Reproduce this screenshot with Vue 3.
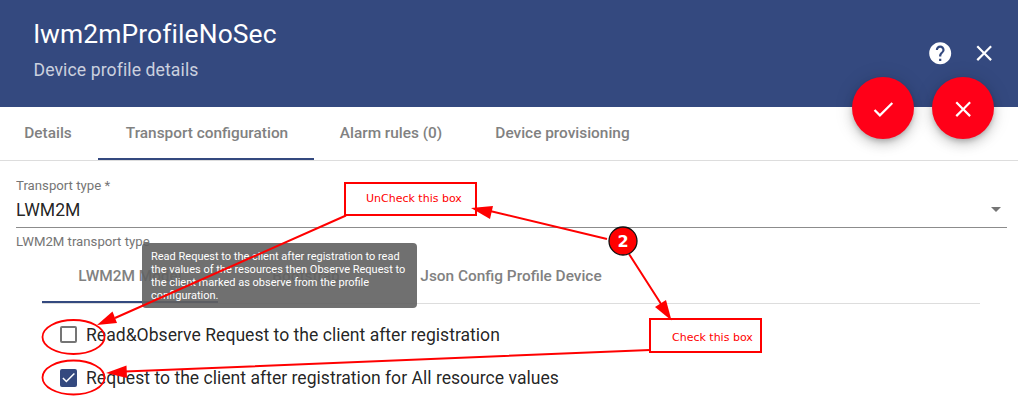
<script setup>
const mainTabs = [
  { label: 'Details', cls: 'details' },
  { label: 'Transport configuration', cls: 'transport', active: true },
  { label: 'Alarm rules (0)', cls: 'alarm' },
  { label: 'Device provisioning', cls: 'provisioning' },
]
const profileTabs = [
  { label: 'LWM2M Model', active: true },
  { label: 'Bootstrap' },
  { label: 'Json Config Profile Device', wide: true },
]
const options = [
  { label: 'Read&Observe Request to the client after registration', checked: false },
  { label: 'Request to the client after registration for All resource values', checked: true },
]
</script>

<template>
  <div class="page">
    <header class="header">
      <div class="titles">
        <h1>lwm2mProfileNoSec</h1>
        <p>Device profile details</p>
      </div>
      <div class="tools">
        <svg class="icon" viewBox="0 0 24 24"><path d="M12 2C6.48 2 2 6.48 2 12s4.48 10 10 10 10-4.480 10-10S17.52 2 12 2zm1 17h-2v-2h2v2zm2.070-7.750l-.9.920C13.450 12.900 13 13.500 13 15h-2v-.5c0-1.100.45-2.100 1.170-2.830l1.240-1.260c.37-.36.59-.86.59-1.410 0-1.100-.9-2-2-2s-2 .9-2 2H8c0-2.210 1.790-4 4-4s4 1.790 4 4c0 .88-.36 1.680-.93 2.250z" /></svg>
        <svg class="icon" viewBox="0 0 24 24"><path d="M19 6.410L17.590 5 12 10.590 6.410 5 5 6.410 10.590 12 5 17.590 6.410 19 12 13.410 17.590 19 19 17.590 13.410 12z" /></svg>
      </div>
      <div class="fabs">
        <button class="fab"><svg class="icon" viewBox="0 0 24 24"><path d="M9 16.170L4.830 12l-1.420 1.410L9 19 21 7l-1.410-1.410z" /></svg></button>
        <button class="fab"><svg class="icon" viewBox="0 0 24 24"><path d="M19 6.410L17.590 5 12 10.590 6.410 5 5 6.410 10.590 12 5 17.590 6.410 19 12 13.410 17.590 19 19 17.590 13.410 12z" /></svg></button>
      </div>
    </header>

    <nav class="tabs">
      <div v-for="t in mainTabs" :key="t.label" class="tab" :class="[t.cls, { active: t.active }]">{{ t.label }}</div>
    </nav>

    <main class="content">
      <div class="field">
        <label>Transport type *</label>
        <div class="select"><span>LWM2M</span><i class="caret"></i></div>
        <div class="hint">LWM2M transport type</div>
      </div>
      <nav class="subtabs">
        <div v-for="t in profileTabs" :key="t.label" class="subtab" :class="{ active: t.active, wide: t.wide }">{{ t.label }}</div>
      </nav>
      <div class="options">
        <div v-for="o in options" :key="o.label" class="option">
          <span class="box" :class="{ checked: o.checked }">
            <svg v-if="o.checked" viewBox="0 0 24 24"><path d="M4.100 12.700L9 17.600 20.300 6.300" fill="none" stroke="#fff" stroke-width="2.130" /></svg>
          </span>
          <span>{{ o.label }}</span>
        </div>
      </div>
    </main>

    <div class="tooltip">Read Request to the client after registration to read<br />the values of the resources then Observe Request to<br />the client marked as observe from the profile<br />configuration.</div>

    <svg class="notes" viewBox="0 0 1018 420" width="1018" height="420">
      <g fill="none" stroke="#f00" stroke-width="2">
        <path d="M346 215.500L115 318M607 239L490 211M629 254L663 307M650 350L125 371.500" />
        <rect x="345" y="183" width="131" height="32" />
        <rect x="650" y="319" width="111" height="33" />
      </g>
      <g fill="none" stroke="#f00" stroke-width="1.800">
        <ellipse cx="73.500" cy="337" rx="31" ry="17" />
        <ellipse cx="73.500" cy="377.500" rx="31" ry="17" />
      </g>
      <g fill="#f00">
        <path d="M97 325L112.500 311.500 117 323z" />
        <path d="M471 208L493 206 490 219z" />
        <path d="M671.500 320.500L655 307 666 300z" />
        <path d="M106 373L126.500 365.500 127 378z" />
      </g>
      <circle cx="623" cy="241" r="14" fill="#f00" stroke="#111" stroke-width="1.300" />
      <text class="number" x="623" y="246.500" text-anchor="middle">2</text>
      <text class="note" x="366" y="202">UnCheck this box</text>
      <text class="note" x="672" y="341">Check this box</text>
    </svg>
  </div>
</template>

<style>
body { margin: 0; background: #fff; }
</style>

<style scoped>
.page {
  position: relative;
  width: 1018px;
  height: 420px;
  overflow: hidden;
  background: #fff;
  font-family: Roboto, sans-serif;
  color: rgba(0, 0, 0, 0.87);
}
.header {
  position: relative;
  box-sizing: border-box;
  display: flex;
  justify-content: space-between;
  height: 107px;
  padding: 18px 20.300px 0 33.500px;
  background: #34497f;
  color: #fff;
}
h1 { margin: 0; font-size: 26.4px; line-height: 32px; font-weight: 400; letter-spacing: 0.12px; }
p { margin: 9px 0 0; font-size: 17.6px; line-height: 22px; letter-spacing: 0.1px; color: rgba(255, 255, 255, 0.75); }
.icon { display: block; width: 26.4px; height: 26.4px; fill: #fff; }
.tools { display: flex; gap: 17.6px; height: 26.4px; margin-top: 21.500px; }
.fabs { position: absolute; z-index: 2; top: 77px; right: 24px; display: flex; gap: 18px; }
.fab {
  display: flex;
  align-items: center;
  justify-content: center;
  width: 62px;
  height: 62px;
  padding: 0;
  border: 0;
  border-radius: 50%;
  background: #ff0018;
  box-shadow: 0 3px 5px -1px rgba(0, 0, 0, 0.2), 0 6px 11px rgba(0, 0, 0, 0.14), 0 1px 20px rgba(0, 0, 0, 0.12);
}
.fab .icon { position: relative; top: 1px; width: 26.4px; height: 26.4px; }
.tabs { display: flex; height: 53px; border-bottom: 1px solid #ddd; }
.tab, .subtab {
  box-sizing: border-box;
  display: flex;
  align-items: center;
  justify-content: center;
  font-size: 15.4px;
  font-weight: 500;
  color: #818181;
  white-space: nowrap;
}
.tab { padding-bottom: 1px; }
.details { width: 98px; padding-right: 2px; }
.transport { width: 216px; }
.alarm { width: 154px; }
.provisioning { width: 189px; }
.tab.active { border-bottom: 2px solid #34497f; padding: 1px 0 0 2px; }
.content { padding: 17px 11px 0 16px; }
.field { height: 88px; }
label { display: block; width: max-content; height: 16px; font-size: 17.6px; line-height: 21px; color: #757575; transform: scale(0.75); transform-origin: 0 0; }
.select {
  box-sizing: border-box;
  display: flex;
  justify-content: space-between;
  height: 34px;
  padding: 5px 6px 0 0;
  border-bottom: 1px solid #8c8c8c;
  font-size: 17.6px;
  line-height: 22px;
}
.caret { width: 0; height: 0; margin-top: 8px; border: 5.500px solid transparent; border-top-color: #757575; border-bottom: 0; }
.hint { margin-top: 6px; font-size: 13.2px; line-height: 16px; color: #757575; }
.subtabs { display: flex; width: 938px; height: 54px; margin: -17px 0 0 26px; border-bottom: 1px solid #ddd; }
.subtab { width: 176px; }
.subtab.wide { width: 234px; }
.subtab.active { border-bottom: 2px solid #34497f; padding-top: 2px; }
.options { padding: 9px 0 0 44px; }
.option { display: flex; align-items: center; gap: 9px; height: 43px; font-size: 17.6px; white-space: nowrap; }
.box { box-sizing: border-box; width: 17px; height: 17px; border: 2px solid #757575; border-radius: 2px; }
.box.checked { height: 18px; border: 0; background: #34497f; }
.box svg { display: block; width: 17px; height: 17px; }
.tooltip {
  position: absolute;
  left: 142px;
  top: 243px;
  box-sizing: border-box;
  width: 275px;
  height: 65px;
  padding: 7px 9px;
  border-radius: 4px;
  background: rgba(97, 97, 97, 0.9);
  color: #fff;
  font-size: 11px;
  line-height: 13px;
  white-space: nowrap;
}
.notes { position: absolute; inset: 0; z-index: 3; pointer-events: none; }
.note { font: 11px "DejaVu Sans", sans-serif; fill: #f00; }
.number { font: bold 16px "DejaVu Sans", sans-serif; fill: #fff; }
</style>
